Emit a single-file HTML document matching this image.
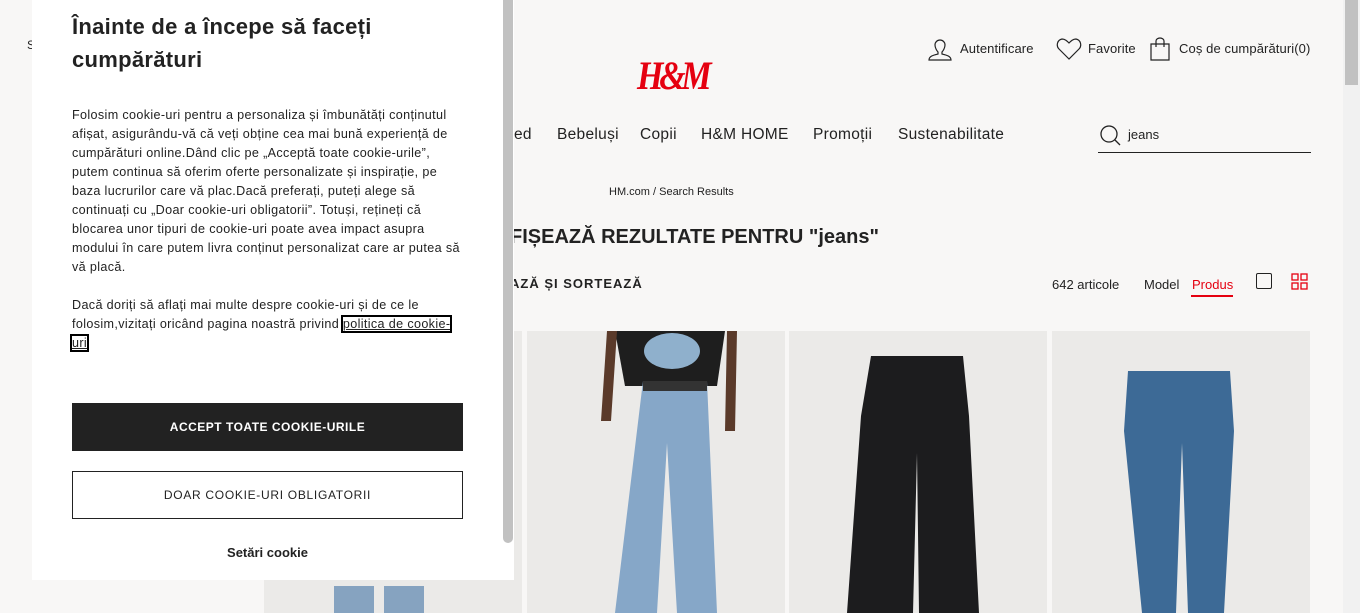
<!DOCTYPE html>
<html><head><meta charset="utf-8"><style>
*{margin:0;padding:0;box-sizing:border-box}
body{width:1360px;height:613px;overflow:hidden;background:#f8f7f6;font-family:"Liberation Sans",sans-serif;color:#222;position:relative}
.a{position:absolute;white-space:nowrap}
.nav{font-size:15.5px;top:126px;letter-spacing:.3px}
.card{position:absolute;top:331px;height:282px;background:#ebeae8;overflow:hidden}
.p{font-size:12.6px;line-height:19px;white-space:normal;width:395px;letter-spacing:.35px}
</style></head><body>
<div class="a" style="left:27px;top:38px;font-size:12px">S</div>
<div class="a" style="left:637px;top:52px;color:#e50010;font:italic bold 40px 'Liberation Serif',serif;letter-spacing:-5px;transform:scaleX(.85);transform-origin:left">H&amp;M</div>
<svg class="a" style="left:927px;top:36px" width="26" height="26" viewBox="0 0 26 26" fill="none" stroke="#222" stroke-width="1.2"><path d="M8 9a5 5 0 0110 0c0 3-2 6-3 7v2c4 1 9 2 9 6H2c0-4 5-5 9-6v-2c-1-1-3-4-3-7z"/></svg>
<div class="a" style="left:960px;top:41px;font-size:13px;letter-spacing:.1px">Autentificare</div>
<svg class="a" style="left:1056px;top:37px" width="26" height="24" viewBox="0 0 26 24" fill="none" stroke="#222" stroke-width="1.2"><path d="M13 22L3 12C0 9 1 3 6 2c3 0 5 2 7 4 2-2 4-4 7-4 5 1 6 7 3 10z"/></svg>
<div class="a" style="left:1088px;top:41px;font-size:13px;letter-spacing:.1px">Favorite</div>
<svg class="a" style="left:1150px;top:37px" width="20" height="24" viewBox="0 0 20 24" fill="none" stroke="#222" stroke-width="1.2"><path d="M1 7h18v16H1z M6 10V4a4 3 0 018 0v6"/></svg>
<div class="a" style="left:1179px;top:41px;font-size:13px;letter-spacing:.1px">Coș de cumpărături(0)</div>
<div class="a nav" style="left:514px">ed</div>
<div class="a nav" style="left:557px">Bebeluși</div>
<div class="a nav" style="left:640px">Copii</div>
<div class="a nav" style="left:701px">H&amp;M HOME</div>
<div class="a nav" style="left:813px">Promoții</div>
<div class="a nav" style="left:898px">Sustenabilitate</div>
<svg class="a" style="left:1099px;top:124px" width="24" height="24" viewBox="0 0 24 24" fill="none" stroke="#222" stroke-width="1.3"><circle cx="10" cy="10" r="8"/><path d="M16 16l5 5"/></svg>
<div class="a" style="left:1128px;top:127px;font-size:13px">jeans</div>
<div class="a" style="left:1098px;top:152px;width:213px;height:1px;background:#222"></div>
<div class="a" style="left:609px;top:186px;font-size:11px">HM.com / Search Results</div>
<div class="a" style="left:510px;top:226px;font-size:20px;font-weight:bold">FIȘEAZĂ REZULTATE PENTRU "jeans"</div>
<div class="a" style="left:510px;top:276px;font-size:13px;font-weight:bold;letter-spacing:1px">AZĂ ȘI SORTEAZĂ</div>
<div class="a" style="left:1052px;top:277px;font-size:13px">642 articole</div>
<div class="a" style="left:1144px;top:277px;font-size:13px">Model</div>
<div class="a" style="left:1192px;top:277px;font-size:13px;color:#e50010">Produs</div>
<div class="a" style="left:1191px;top:295px;width:42px;height:2px;background:#e50010"></div>
<div class="a" style="left:1256px;top:273px;width:16px;height:16px;border:1.5px solid #222;border-radius:2px"></div>
<svg class="a" style="left:1291px;top:273px" width="17" height="17" fill="none" stroke="#e50010" stroke-width="1.3"><rect x="1" y="1" width="6" height="6"/><rect x="10" y="1" width="6" height="6"/><rect x="1" y="10" width="6" height="6"/><rect x="10" y="10" width="6" height="6"/></svg>
<div class="card" style="left:264px;width:258px"><svg width="258" height="282"><path d="M70 255h40v30H70zM120 255h40v30h-40z" fill="#86a3c0"/></svg></div>
<div class="card" style="left:527px;width:258px"><svg width="258" height="282"><path d="M88 0h110l-8 55H98z" fill="#1e1e1e"/><ellipse cx="145" cy="20" rx="28" ry="18" fill="#8fb0cc"/><path d="M116 50h64l10 232h-40l-10-170-10 170H88z" fill="#86a7c8"/><path d="M116 50h64v10h-64z" fill="#333"/><path d="M80 0h10l-6 90H74z M200 0h10l-2 100h-10z" fill="#5a3a2a"/></svg></div>
<div class="card" style="left:789px;width:258px"><svg width="258" height="282"><path d="M82 25h92l6 60 10 197h-60l-2-160-4 160H58l14-197z" fill="#1c1c1e"/></svg></div>
<div class="card" style="left:1052px;width:258px"><svg width="258" height="282"><path d="M76 40h102l4 60-10 182h-36l-6-170-6 170H90L72 100z" fill="#3d6a96"/></svg></div>
<div class="a" style="left:1343px;top:0;width:17px;height:613px;background:#f1f1f1"></div>
<div class="a" style="left:1345px;top:0;width:13px;height:85px;background:#c1c1c1"></div>
<div class="a" style="left:32px;top:0;width:482px;height:580px;background:#fff">
<div class="a" style="left:471px;top:0;width:10px;height:543px;background:#c1c1c1;border-radius:0 0 5px 5px"></div>
<div class="a" style="left:40px;top:10px;font-size:22px;font-weight:bold;line-height:33px;white-space:normal;width:360px;letter-spacing:.3px">Înainte de a începe să faceți cumpărături</div>
<div class="a p" style="left:40px;top:106px">Folosim cookie-uri pentru a personaliza și îmbunătăți conținutul afișat, asigurându-vă că veți obține cea mai bună experiență de cumpărături online.Dând clic pe „Acceptă toate cookie-urile”, putem continua să oferim oferte personalizate și inspirație, pe baza lucrurilor care vă plac.Dacă preferați, puteți alege să continuați cu „Doar cookie-uri obligatorii”. Totuși, rețineți că blocarea unor tipuri de cookie-uri poate avea impact asupra modului în care putem livra conținut personalizat care ar putea să vă placă.</div>
<div class="a p" style="left:40px;top:296px;width:388px">Dacă doriți să aflați mai multe despre cookie-uri și de ce le folosim,vizitați oricând pagina noastră privind <span style="text-decoration:underline;outline:2px solid #000">politica de cookie-uri</span></div>
<div class="a" style="left:40px;top:403px;width:391px;height:48px;background:#222;color:#fff;font-size:12px;font-weight:bold;text-align:center;line-height:48px;letter-spacing:.5px">ACCEPT TOATE COOKIE-URILE</div>
<div class="a" style="left:40px;top:471px;width:391px;height:48px;border:1px solid #222;font-size:12px;text-align:center;line-height:46px;letter-spacing:.7px">DOAR COOKIE-URI OBLIGATORII</div>
<div class="a" style="left:40px;top:545px;width:391px;text-align:center;font-size:13px;font-weight:bold">Setări cookie</div>
</div>
</body></html>
